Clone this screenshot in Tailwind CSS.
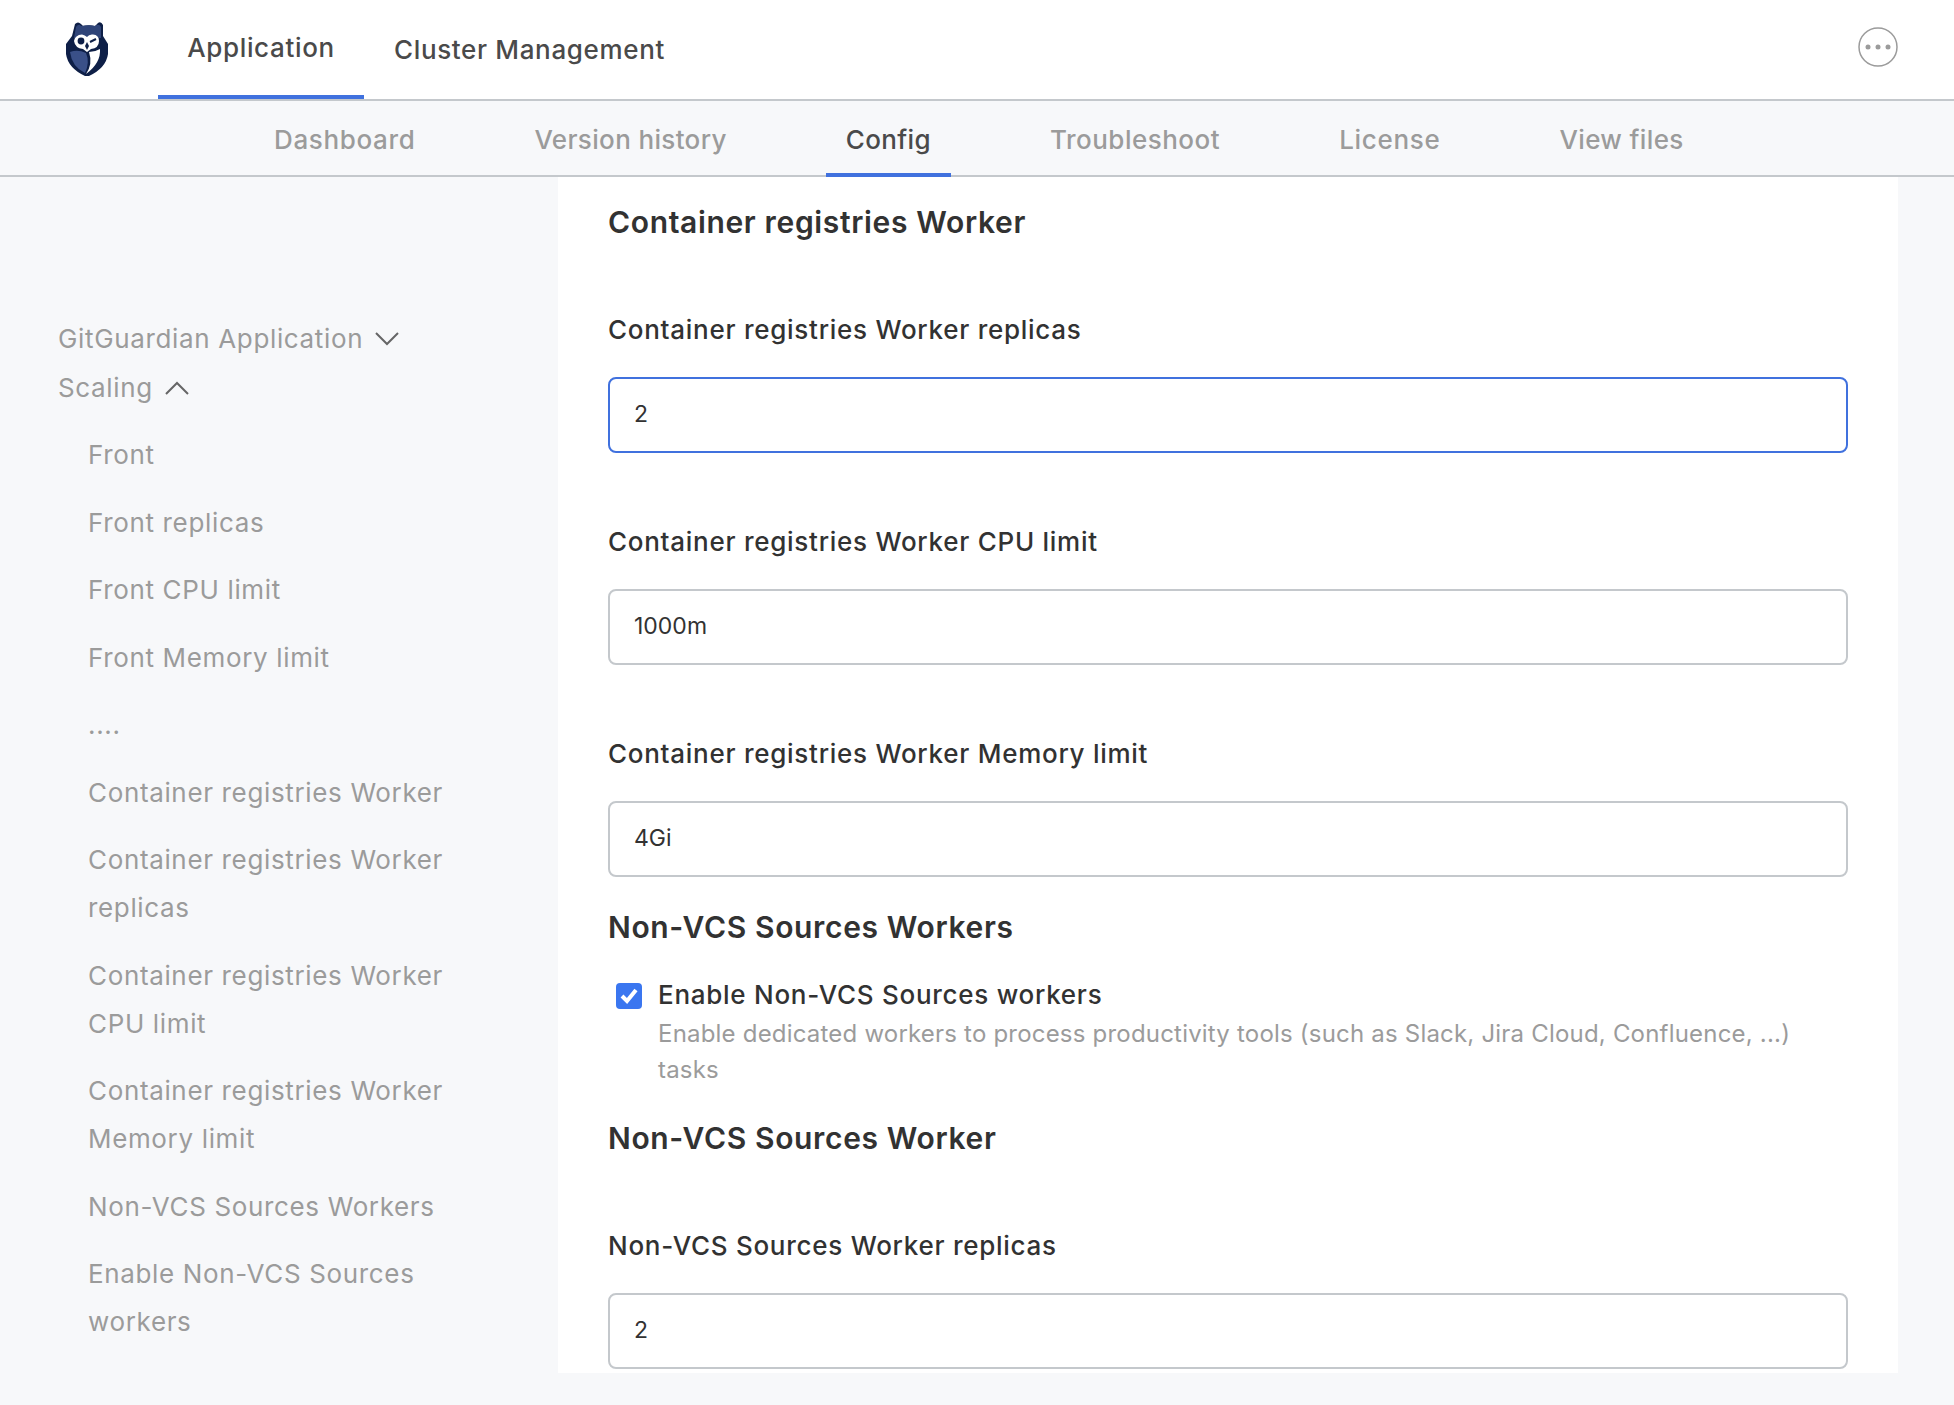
<!DOCTYPE html>
<html lang="en">
<head>
  <meta charset="UTF-8">
  <title>Config</title>
  <script src="https://cdn.jsdelivr.net/npm/@tailwindcss/browser@4"></script>
</head>
<body class="bg-[#f7f8fa] font-['Inter',sans-serif] text-[26px] text-[#323232]">
  <div class="h-[1405px] overflow-hidden">
    <!-- Top nav -->
    <header class="h-[101px] bg-white border-b-2 border-[#c4c8cc] flex items-stretch">
      <div class="w-[158px] flex pl-[66px] pt-[22px]">
        <svg width="42" height="54" viewBox="0 0 42 54">
          <path d="M9 2 Q12 -1 15 2 L17 4 Q23 2.5 29 4 L32 1 Q35 -1 37 3 L37 14 L42 22 L42 32 Q40 46 23 54 L19 54 Q2 46 0 32 L0 22 L6 14 Z" fill="#0e1f47"/>
          <path d="M10 5 Q13 1 15 4 Q23 2.5 29 4 Q33 1 35 5 L35 16 L8 16 Z" fill="#2f4478"/>
          <path d="M8 19 Q9 13 16 12.5 Q19 13 21 15 Q23 12 27 12.5 Q33 13 33 19 Q33 26 25 27 L21 30 L17 27 Q9 26 8 19 Z" fill="#fff"/>
          <circle cx="15" cy="19" r="3.4" fill="#0e1f47"/>
          <path d="M24 20 L30 17" stroke="#0e1f47" stroke-width="2" fill="none"/>
          <path d="M21 20 L23 24 L21 28 L19 24 Z" fill="#0e1f47"/>
          <path d="M4 30 Q12 27 20 31 Q24 40 19 51 Q6 45 4 30 Z" fill="#3a5088"/>
          <path d="M23 30 Q29 30 34 27 Q35 41 20 52 Q27 42 23 30 Z" fill="#fff"/>
        </svg>
      </div>
      <nav class="flex items-stretch tracking-[0.65px]">
        <a class="w-[206px] flex items-center justify-center border-b-4 border-[#4071de] text-[#4a4a4a] font-medium">Application</a>
        <a class="ml-[30px] flex items-center text-[#4a4a4a] font-medium">Cluster Management</a>
      </nav>
      <div class="ml-auto pr-[56px] flex items-start pt-[27px]">
        <svg width="40" height="40" viewBox="0 0 40 40">
          <circle cx="20" cy="20" r="19" fill="none" stroke="#9b9b9b" stroke-width="1.5"/>
          <circle cx="10" cy="20" r="2.5" fill="#9b9b9b"/>
          <circle cx="20" cy="20" r="2.5" fill="#9b9b9b"/>
          <circle cx="30" cy="20" r="2.5" fill="#9b9b9b"/>
        </svg>
      </div>
    </header>

    <!-- Sub nav -->
    <nav class="h-[76px] border-b-2 border-[#c4c8cc] flex items-stretch pl-[254px] gap-[79px] text-[#9b9b9b] font-medium tracking-[0.35px]">
      <a class="px-5 pt-[3px] flex items-center tracking-[0.65px]">Dashboard</a>
      <a class="px-5 pt-[3px] flex items-center">Version history</a>
      <a class="px-5 pt-[5px] flex items-center text-[#4a4a4a] border-b-4 border-[#4071de] mb-[-2px]">Config</a>
      <a class="px-5 pt-[3px] flex items-center tracking-[0.5px]">Troubleshoot</a>
      <a class="px-5 pt-[3px] flex items-center tracking-[0.7px]">License</a>
      <a class="px-5 pt-[3px] flex items-center">View files</a>
    </nav>

    <div class="flex items-start">
      <!-- Sidebar -->
      <aside class="w-[558px] pl-[58px] pt-[138px] text-[#9b9b9b] leading-[48px] tracking-[0.65px]">
        <div class="flex items-center gap-[12px]">GitGuardian Application
          <svg width="24" height="14" viewBox="0 0 24 14"><path d="M1 1 L12 12 L23 1" fill="none" stroke="#666" stroke-width="2"/></svg>
        </div>
        <div class="flex items-center gap-[12px] mt-[1px]">Scaling
          <svg width="24" height="14" viewBox="0 0 24 14"><path d="M1 13 L12 2 L23 13" fill="none" stroke="#666" stroke-width="2"/></svg>
        </div>
        <ul class="pl-[30px] mt-[19px] w-[400px] flex flex-col gap-[19.5px]">
          <li>Front</li>
          <li>Front replicas</li>
          <li>Front CPU limit</li>
          <li>Front Memory limit</li>
          <li>....</li>
          <li>Container registries Worker</li>
          <li>Container registries Worker replicas</li>
          <li>Container registries Worker CPU limit</li>
          <li>Container registries Worker Memory limit</li>
          <li>Non-VCS Sources Workers</li>
          <li>Enable Non-VCS Sources workers</li>
        </ul>
      </aside>

      <!-- Config form -->
      <main class="w-[1340px] h-[1196px] bg-white px-[50px] pt-[25px] leading-[36px]">
        <h2 class="text-[30px] font-semibold leading-[40px] tracking-[0.65px]">Container registries Worker</h2>

        <label class="block mt-[70px] font-medium tracking-[0.73px]">Container registries Worker replicas</label>
        <input value="2" class="block mt-[29px] w-full h-[76px] px-6 pb-[2px] rounded-lg border-2 border-[#4071de] bg-white text-[23px]">

        <label class="block mt-[71px] font-medium tracking-[0.73px]">Container registries Worker CPU limit</label>
        <input value="1000m" class="block mt-[29px] w-full h-[76px] px-6 pb-[2px] rounded-lg border-2 border-[#c4c8cc] bg-white text-[23px]">

        <label class="block mt-[71px] font-medium tracking-[0.73px]">Container registries Worker Memory limit</label>
        <input value="4Gi" class="block mt-[29px] w-full h-[76px] px-6 pb-[2px] rounded-lg border-2 border-[#c4c8cc] bg-white text-[23px]">

        <h2 class="mt-[30px] text-[30px] font-semibold leading-[40px] tracking-[0.65px]">Non-VCS Sources Workers</h2>

        <div class="mt-[30px] flex">
          <span class="ml-[8px] mt-[6px] w-[26px] h-[26px] rounded bg-[#3a76f0] flex items-center justify-center shrink-0">
            <svg width="20" height="18" viewBox="0 0 20 18"><path d="M3 9 L8 14 L17 3" fill="none" stroke="#fff" stroke-width="4"/></svg>
          </span>
          <div class="ml-[16px]">
            <div class="font-medium tracking-[0.73px]">Enable Non-VCS Sources workers</div>
            <p class="mt-[3px] text-[24px] text-[#9b9b9b] tracking-[0.2px]">Enable dedicated workers to process productivity tools (such as Slack, Jira Cloud, Confluence, ...) tasks</p>
          </div>
        </div>

        <h2 class="mt-[30px] text-[30px] font-semibold leading-[40px] tracking-[0.65px]">Non-VCS Sources Worker</h2>

        <label class="block mt-[70px] font-medium tracking-[0.73px]">Non-VCS Sources Worker replicas</label>
        <input value="2" class="block mt-[29px] w-full h-[76px] px-6 pb-[2px] rounded-lg border-2 border-[#c4c8cc] bg-white text-[23px]">
      </main>
    </div>
  </div>
</body>
</html>
